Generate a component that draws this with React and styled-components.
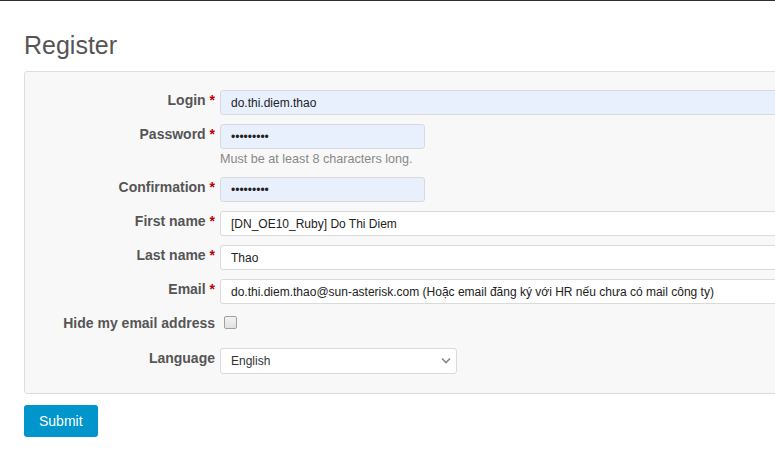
import styled, { createGlobalStyle } from 'styled-components';

const GlobalStyle = createGlobalStyle`
  html, body {
    margin: 0;
    padding: 0;
    overflow: hidden;
    background: #ffffff;
    font-family: "Liberation Sans", Arial, sans-serif;
  }
`;

const TopBar = styled.div`
  background-color: #2b3035;
  height: 1px;
  width: 100%;
`;

const Page = styled.div`
  min-width: 1000px;
  padding: 0 0 0 24px;
`;

const Heading = styled.h2`
  color: #555555;
  font-size: 25px;
  font-weight: normal;
  line-height: 28px;
  margin: 30px 0 12px 0;
`;

const Box = styled.div`
  background-color: #f8f8f8;
  border: 1px solid #dddddd;
  border-radius: 3px;
  display: flex;
  flex-direction: column;
  gap: 9px;
  padding: 18px 0 19px 0;
`;

const Row = styled.div`
  align-items: flex-start;
  display: flex;
  min-height: ${props => props.height || 25}px;
`;

const Label = styled.label`
  color: #555555;
  flex: 0 0 190px;
  font-size: 14px;
  font-weight: bold;
  line-height: 20px;
  margin-right: 5px;
  text-align: right;
`;

const Required = styled.span`
  color: #bb0000;
`;

const Field = styled.div`
  display: flex;
  flex-direction: column;
`;

const Input = styled.input`
  background-color: ${props => props.autofill ? '#e8f0fe' : '#ffffff'};
  border: 1px solid #dadada;
  border-radius: 3px;
  box-sizing: border-box;
  color: #222222;
  font-family: "Liberation Sans", Arial, sans-serif;
  font-size: 12px;
  height: 25px;
  margin: 0;
  outline: none;
  padding: 0 10px;
  width: ${props => props.width}px;
`;

const Hint = styled.em`
  color: #888888;
  font-size: 12.6px;
  font-style: normal;
  line-height: 18px;
  margin-top: 1px;
`;

const Checkbox = styled.input`
  appearance: none;
  background: linear-gradient(#f2f2f2, #e2e2e2);
  border: 1px solid #a0a0a0;
  border-radius: 2px;
  box-sizing: border-box;
  height: 13px;
  margin: 3px 0 0 4px;
  width: 13px;
`;

const SelectWrap = styled.div`
  position: relative;
  width: 237px;
`;

const Select = styled.select`
  appearance: none;
  background-color: #ffffff;
  border: 1px solid #dadada;
  border-radius: 3px;
  box-sizing: border-box;
  color: #333333;
  font-family: "Liberation Sans", Arial, sans-serif;
  font-size: 12px;
  height: 26px;
  margin: 0;
  outline: none;
  padding: 0 10px;
  width: 100%;
`;

const Chevron = styled.svg`
  pointer-events: none;
  position: absolute;
  right: 6px;
  top: 9px;
`;

const SubmitButton = styled.button`
  background-color: #0096cc;
  border: none;
  border-radius: 3px;
  color: #ffffff;
  cursor: pointer;
  font-family: "Liberation Sans", Arial, sans-serif;
  font-size: 14px;
  height: 32px;
  margin-top: 11px;
  padding: 0 15px;
`;

const fields = [
  { label: 'Login', value: 'do.thi.diem.thao', width: 700, autofill: true },
  { label: 'Password', value: '•••••••••', width: 205, autofill: true, type: 'password', hint: 'Must be at least 8 characters long.' },
  { label: 'Confirmation', value: '•••••••••', width: 205, autofill: true, type: 'password' },
  { label: 'First name', value: '[DN_OE10_Ruby] Do Thi Diem', width: 700 },
  { label: 'Last name', value: 'Thao', width: 700 },
  { label: 'Email', value: 'do.thi.diem.thao@sun-asterisk.com (Hoặc email đăng ký với HR nếu chưa có mail công ty)', width: 700 },
];

function App() {
  return <>
    <GlobalStyle />
    <TopBar />
    <Page>
      <Heading>Register</Heading>
      <Box>
        { fields.map(f => <Row key={f.label}>
            <Label>{f.label} <Required>*</Required></Label>
            <Field>
              <Input
                type={f.type || 'text'}
                defaultValue={f.type === 'password' ? 'secretpwd' : f.value}
                width={f.width}
                autofill={f.autofill ? 1 : 0} />
              { f.hint && <Hint>{f.hint}</Hint> }
            </Field>
          </Row>) }
        <Row height={26}>
          <Label>Hide my email address</Label>
          <Checkbox type='checkbox' />
        </Row>
        <Row>
          <Label>Language</Label>
          <SelectWrap>
            <Select defaultValue='en'>
              <option value='en'>English</option>
            </Select>
            <Chevron width='10' height='7' viewBox='0 0 10 7'>
              <path d='M1 1.5 L5 5.5 L9 1.5' fill='none' stroke='#888' strokeWidth='1.6' />
            </Chevron>
          </SelectWrap>
        </Row>
      </Box>
      <SubmitButton>Submit</SubmitButton>
    </Page>
  </>;
}

export default App;
